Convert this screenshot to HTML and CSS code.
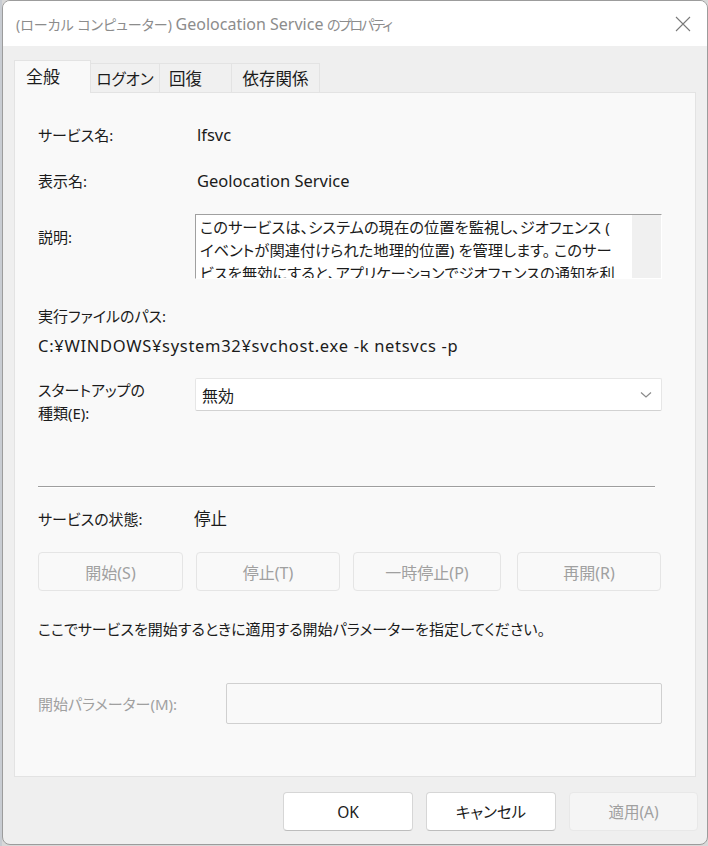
FILE: index.html
```html
<!DOCTYPE html>
<html lang="ja">
<head>
<meta charset="utf-8">
<title>Geolocation Service のプロパティ</title>
<link rel="stylesheet" href="styles.css">
</head>
<body>
<div class="desk"></div>
<div class="window">
  <div class="titlebar">
    <div class="title">(ローカル コンピューター) <span class="tlat">Geolocation Service</span> <span class="tsub">のプロパティ</span></div>
    <div class="close">
      <svg width="16" height="16" viewBox="0 0 16 16"><path d="M1 1 L15 15 M15 1 L1 15" stroke="#7a7a7a" stroke-width="1.1" fill="none"/></svg>
    </div>
  </div>
  <div class="body">
    <div class="tabs">
      <div class="tab active">全般</div>
      <div class="tab t2">ログオン</div>
      <div class="tab t3">回復</div>
      <div class="tab t4">依存関係</div>
    </div>
    <div class="panel">
      <div class="row r-name">
        <div class="label">サービス名:</div>
        <div class="value lat">lfsvc</div>
      </div>
      <div class="row r-disp">
        <div class="label">表示名:</div>
        <div class="value lat">Geolocation Service</div>
      </div>
      <div class="row r-desc">
        <div class="label desc-label">説明:</div>
        <div class="descbox">
          <div class="desctext">このサービスは、システムの現在の位置を監視し、ジオフェンス (<br>イベントが関連付けられた地理的位置) を管理します。 このサー<br>ビスを無効にすると、アプリケーションでジオフェンスの通知を利<br>用できなくなります。</div>
          <div class="scroll"></div>
        </div>
      </div>
      <div class="line r-pathlabel">実行ファイルのパス:</div>
      <div class="line r-path lat">C:¥WINDOWS¥system32¥svchost.exe -k netsvcs -p</div>
      <div class="row r-start">
        <div class="label two">スタートアップの<br>種類(E):</div>
        <div class="select">
          <span>無効</span>
          <svg width="12" height="8" viewBox="0 0 12 8"><path d="M1 1.5 L6 6 L11 1.5" stroke="#8a8a8a" stroke-width="1.2" fill="none"/></svg>
        </div>
      </div>
      <div class="sep"></div>
      <div class="row r-status">
        <div class="label">サービスの状態:</div>
        <div class="value big">停止</div>
      </div>
      <div class="btnrow">
        <div class="btn dis b1">開始(S)</div>
        <div class="btn dis b2">停止(T)</div>
        <div class="btn dis b3">一時停止(P)</div>
        <div class="btn dis b4">再開(R)</div>
      </div>
      <div class="line r-info">ここでサービスを開始するときに適用する開始パラメーターを指定してください。</div>
      <div class="row r-param">
        <div class="label grey">開始パラメーター(M):</div>
        <div class="input"></div>
      </div>
    </div>
    <div class="footer">
      <div class="fbtn">OK</div>
      <div class="fbtn">キャンセル</div>
      <div class="fbtn disabled">適用(A)</div>
    </div>
  </div>
</div>
</body>
</html>
```
FILE: styles.css
```css
html, body {
  margin: 0;
  padding: 0;
  height: 846px;
  overflow: hidden;
}
body {
  background: #d8d8d8;
  font-family: "Noto Sans", "Noto Sans CJK JP", sans-serif;
  font-feature-settings: "palt";
  font-size: 15px;
  color: #1b1b1b;
  display: flex;
}
.desk {
  width: 2px;
  flex: none;
  background: #c8ccd2;
}
.window {
  width: 704px;
  height: 843px;
  border: 1px solid #9c9c9c;
  border-radius: 8px;
  background: #efefef;
  overflow: hidden;
  display: flex;
  flex-direction: column;
}
.titlebar {
  height: 45px;
  flex: none;
  background: #ffffff;
  display: flex;
  align-items: center;
  justify-content: space-between;
  padding: 0 16px 0 13px;
}
.title {
  color: #8c8c8c;
  font-size: 14px;
  padding-top: 1px;
}
.tlat { font-size: 16px; }
.tsub { letter-spacing: -2px; }
.close {
  display: flex;
  align-items: center;
}
.body {
  flex: 1;
  padding: 14px 11px 0 11px;
  display: flex;
  flex-direction: column;
}
.tabs {
  display: flex;
  align-items: flex-end;
  height: 32px;
}
.tab {
  height: 29px;
  box-sizing: border-box;
  border: 1px solid #e3e3e3;
  border-bottom: none;
  border-left: none;
  background: #f0f0f0;
  display: flex;
  align-items: center;
  justify-content: center;
  font-size: 16.5px;
}
.tab.active {
  width: 77px;
  height: 33px;
  border-left: 1px solid #e3e3e3;
  background: #f9f9f9;
  justify-content: flex-start;
  padding-left: 11px;
  padding-bottom: 3px;
  position: relative;
  z-index: 1;
  margin-bottom: -1px;
  font-size: 17px;
}
.t2 { width: 69px; font-size: 15.5px; }
.t3 { width: 72px; justify-content: flex-start; padding-left: 9px; }
.t4 { width: 88px; }
.panel {
  height: 685px;
  box-sizing: border-box;
  border: 1px solid #e3e3e3;
  background: #f9f9f9;
  padding: 31px 0 0 23px;
  display: flex;
  flex-direction: column;
}
.row {
  display: flex;
  align-items: center;
}
.label {
  width: 159px;
  flex: none;
  line-height: 22px;
}
.value {
  line-height: 22px;
}
.lat { font-size: 16.5px; }
.big { font-size: 16.5px; }
.r-disp { margin-top: 24px; }
.r-desc {
  margin-top: 22px;
  align-items: flex-start;
}
.desc-label {
  margin-top: 12px;
  width: 157px;
}
.descbox {
  width: 467px;
  height: 65px;
  box-sizing: border-box;
  border: 1px solid;
  border-color: #a0a0a0 #ffffff #ffffff #a0a0a0;
  background: #ffffff;
  display: flex;
  overflow: hidden;
}
.desctext {
  flex: 1;
  padding: 1px 0 0 4px;
  line-height: 23px;
  font-size: 15.3px;
  overflow: hidden;
  white-space: nowrap;
}
.scroll {
  width: 29px;
  flex: none;
  background: #f0f0f0;
}
.line { line-height: 22px; }
.r-pathlabel { margin-top: 26px; }
.r-path {
  margin-top: 8px;
  letter-spacing: 0.7px;
}
.r-start {
  margin-top: 21px;
  align-items: flex-start;
}
.label.two {
  line-height: 23px;
  margin-top: 1px;
  width: 157px;
}
.select {
  width: 467px;
  height: 33px;
  box-sizing: border-box;
  background: #ffffff;
  border: 1px solid #e6e6e6;
  border-bottom-color: #d2d2d2;
  border-radius: 2px;
  display: flex;
  align-items: center;
  justify-content: space-between;
  padding: 0 9px 0 6px;
  font-size: 16px;
}
.sep {
  width: 617px;
  height: 1px;
  background: #9e9e9e;
  border-bottom: 1px solid #ffffff;
  margin-top: 61px;
}
.r-status { margin-top: 20px; }
.r-status .label { width: 156px; }
.btnrow {
  display: flex;
  margin-top: 22px;
}
.btn {
  height: 39px;
  box-sizing: border-box;
  border: 1px solid #e5e5e5;
  border-radius: 4px;
  background: #f9f9f9;
  display: flex;
  align-items: center;
  justify-content: center;
  color: #a0a0a0;
  font-size: 16px;
}
.b1 { width: 145px; }
.b2 { width: 144px; margin-left: 13px; }
.b3 { width: 148px; margin-left: 13px; }
.b4 { width: 144px; margin-left: 16px; }
.r-info { margin-top: 27px; }
.r-param { margin-top: 43px; }
.label.grey {
  color: #a0a0a0;
  width: 188px;
}
.input {
  width: 436px;
  height: 41px;
  box-sizing: border-box;
  border: 1px solid #d0d0d0;
  border-radius: 2px;
  background: #f9f9f9;
}
.footer {
  display: flex;
  justify-content: flex-end;
  gap: 13px;
  margin-top: 15px;
  margin-right: -2px;
}
.fbtn {
  width: 130px;
  height: 39px;
  box-sizing: border-box;
  border: 1px solid #d6d6d6;
  border-bottom-color: #bdbdbd;
  border-radius: 4px;
  background: #ffffff;
  display: flex;
  align-items: center;
  justify-content: center;
  font-size: 15.5px;
}
.fbtn.disabled {
  width: 129px;
  background: #f5f5f5;
  border-color: #e8e8e8;
  color: #a0a0a0;
}
```
